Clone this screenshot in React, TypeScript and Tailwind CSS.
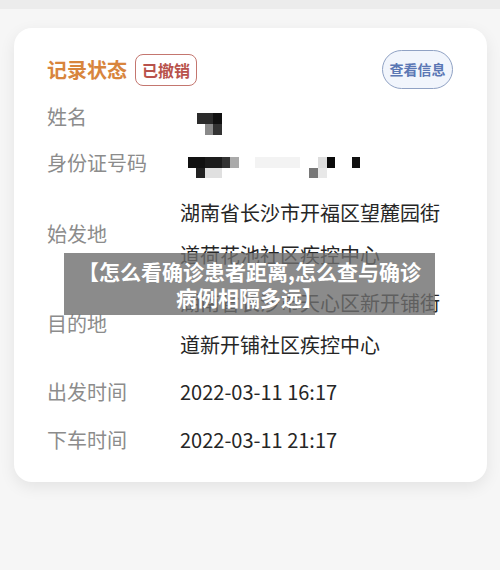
import React from 'react';

const font = { fontFamily: '"Noto Sans CJK SC", "Noto Sans", sans-serif' };

const Row = ({ label, children, className }: { label: string; children: React.ReactNode; className: string }) => (
    <div className={`flex items-center ${className}`}>
        <div className="w-[133px] shrink-0 text-[20px] text-[#8c8c8c]">{label}</div>
        <div className="flex-1 text-[20px] text-[#262626]">{children}</div>
    </div>
);

const App = () => {
    return (
        <div className="relative w-[500px] h-[570px] bg-[#f6f6f6] overflow-hidden" style={font}>
            <div className="h-[9px] bg-[#ececec]" />
            <div className="mt-[19px] ml-[14px] w-[473px] rounded-[18px] bg-white shadow-[0_5px_16px_rgba(0,0,0,0.08)] pl-[33px] pr-[34px] pt-[22px] pb-[18px]">
                {/* header */}
                <div className="flex items-center justify-between h-[39px]">
                    <div className="flex items-center">
                        <span className="text-[20px] font-bold text-[#d8853d] leading-none">记录状态</span>
                        <span className="ml-[8px] h-[32px] px-[6px] flex items-center rounded-[8px] border-[1.5px] border-[#c4766f] text-[16px] font-bold text-[#b8524b]">已撤销</span>
                    </div>
                    <button className="h-[39px] w-[71px] rounded-full border-[1.5px] border-[#90a2c4] bg-[#f1f5fc] text-[14px] font-bold text-[#5a77b4]">查看信息</button>
                </div>

                <Row label="姓名" className="mt-[5px] h-[46px]">
                    <svg width="200" height="46" className="block">
                        <rect x="17" y="19" width="16" height="11" fill="#2b2b2b" />
                        <rect x="33" y="19" width="9" height="11" fill="#111" />
                        <rect x="25" y="30" width="8" height="11" fill="#8a8a8a" />
                        <rect x="33" y="30" width="9" height="11" fill="#333" />
                    </svg>
                </Row>
                <Row label="身份证号码" className="h-[46px]">
                    <svg width="200" height="46" className="block">
                        <rect x="8" y="17" width="17" height="11" fill="#111" />
                        <rect x="25" y="17" width="17" height="11" fill="#1c1c1c" />
                        <rect x="42" y="17" width="8" height="11" fill="#333" />
                        <rect x="50" y="17" width="9" height="11" fill="#aaa" />
                        <rect x="75" y="17" width="45" height="11" fill="#f3f3f3" />
                        <rect x="138" y="17" width="9" height="11" fill="#ddd" />
                        <rect x="147" y="17" width="8" height="11" fill="#0a0a0a" />
                        <rect x="172" y="17" width="8" height="11" fill="#111" />
                        <rect x="16" y="28" width="9" height="10" fill="#222" />
                        <rect x="25" y="28" width="17" height="10" fill="#e0e0e0" />
                        <rect x="129" y="28" width="9" height="10" fill="#777" />
                        <rect x="138" y="28" width="9" height="10" fill="#e8e8e8" />
                    </svg>
                </Row>
                <Row label="始发地" className="py-[6px]">
                    <div className="leading-[42px]">
                        <div>湖南省长沙市开福区望麓园街</div>
                        <div>道荷花池社区疾控中心</div>
                    </div>
                </Row>
                <Row label="目的地" className="pb-[2px]">
                    <div className="leading-[42px]">
                        <div>湖南省长沙市天心区新开铺街</div>
                        <div>道新开铺社区疾控中心</div>
                    </div>
                </Row>
                <Row label="出发时间" className="h-[48px]">2022-03-11 16:17</Row>
                <Row label="下车时间" className="h-[48px]">2022-03-11 21:17</Row>
            </div>

            {/* caption overlay */}
            <div className="absolute left-[64px] top-[253px] w-[371px] h-[62px] bg-[rgba(110,110,110,0.8)] flex flex-col items-center justify-center text-white font-bold text-[21px] leading-[26px]">
                <div>【怎么看确诊患者距离,怎么查与确诊</div>
                <div>病例相隔多远】</div>
            </div>
        </div>
    );
};

export default App;
